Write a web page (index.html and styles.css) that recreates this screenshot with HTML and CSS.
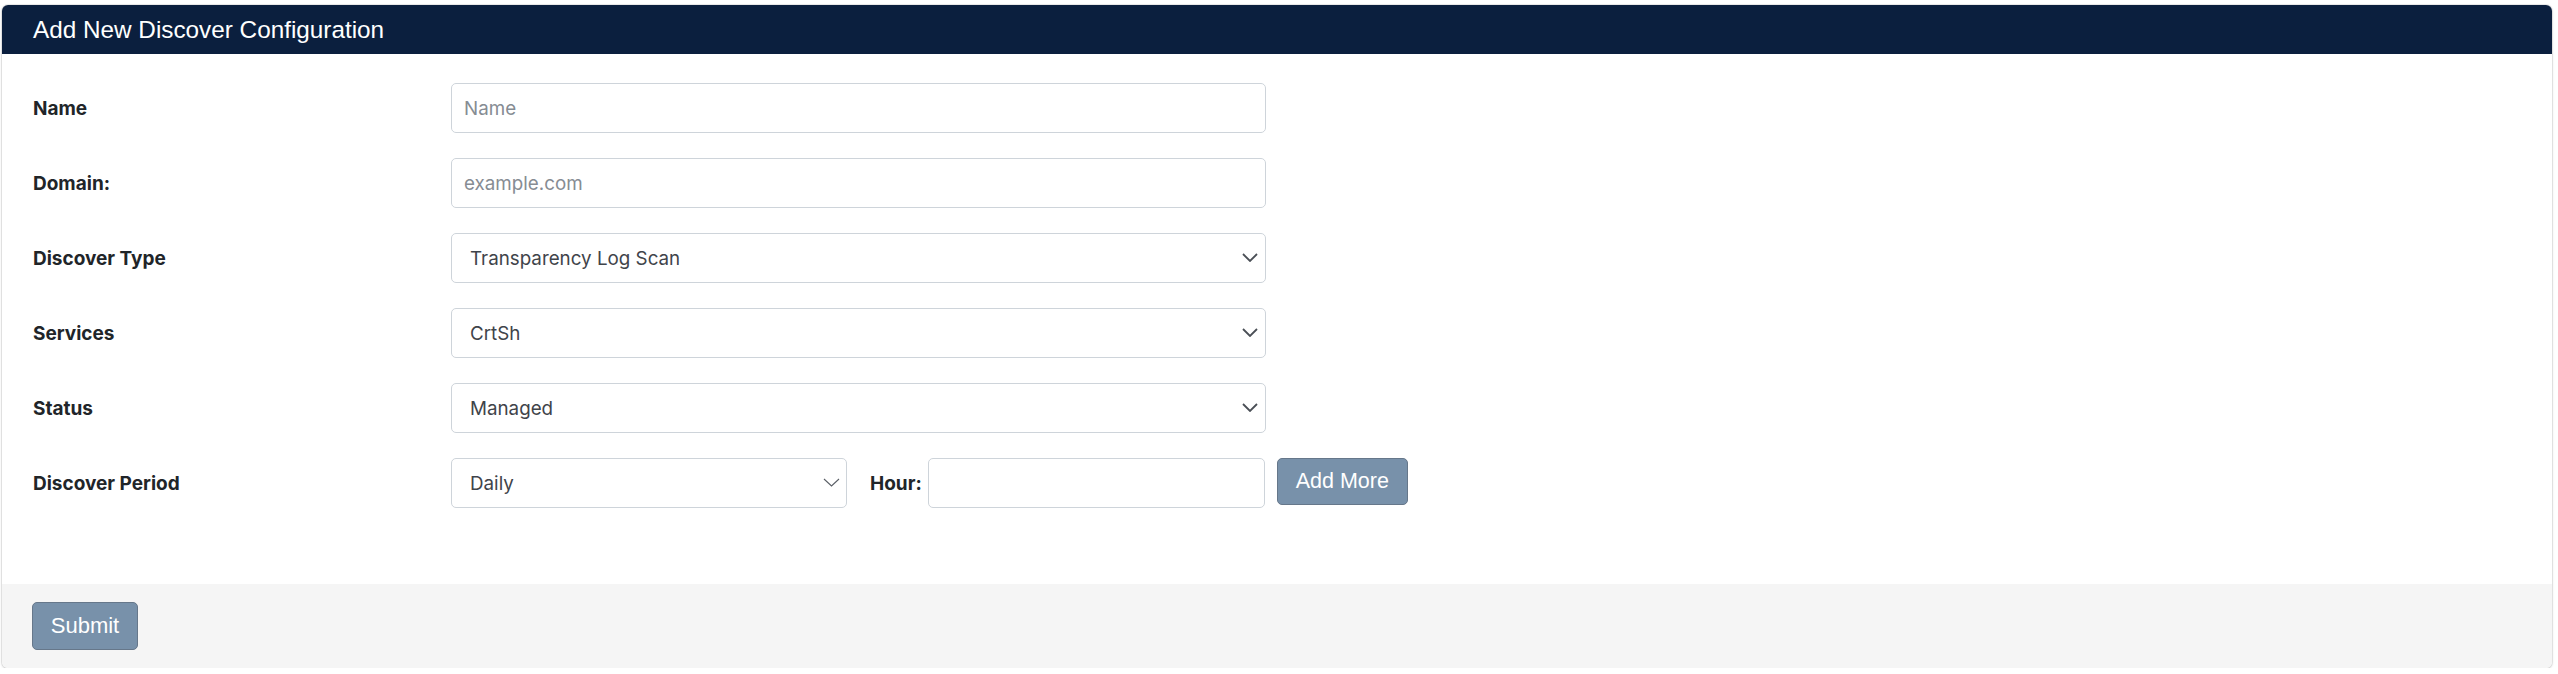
FILE: index.html
```html
<!DOCTYPE html>
<html lang="en">
<head>
<meta charset="utf-8">
<title>Add New Discover Configuration</title>
<link rel="stylesheet" href="styles.css">
</head>
<body>
<div class="page">
  <div class="card">
    <div class="card-header">Add New Discover Configuration</div>
    <form class="card-body">
      <div class="row">
        <label class="lbl">Name</label>
        <div class="field"><input class="ctl" type="text" placeholder="Name"></div>
      </div>
      <div class="row">
        <label class="lbl">Domain:</label>
        <div class="field"><input class="ctl" type="text" placeholder="example.com"></div>
      </div>
      <div class="row">
        <label class="lbl">Discover Type</label>
        <div class="field sel">
          <select class="ctl"><option>Transparency Log Scan</option></select>
          <svg class="chev" width="16" height="9" viewBox="0 0 16 9"><path d="M1 1 L8 8 L15 1" fill="none" stroke="#4a4f56" stroke-width="1.8"/></svg>
        </div>
      </div>
      <div class="row">
        <label class="lbl">Services</label>
        <div class="field sel">
          <select class="ctl"><option>CrtSh</option></select>
          <svg class="chev" width="16" height="9" viewBox="0 0 16 9"><path d="M1 1 L8 8 L15 1" fill="none" stroke="#4a4f56" stroke-width="1.8"/></svg>
        </div>
      </div>
      <div class="row">
        <label class="lbl">Status</label>
        <div class="field sel">
          <select class="ctl"><option>Managed</option></select>
          <svg class="chev" width="16" height="9" viewBox="0 0 16 9"><path d="M1 1 L8 8 L15 1" fill="none" stroke="#4a4f56" stroke-width="1.8"/></svg>
        </div>
      </div>
      <div class="row">
        <label class="lbl">Discover Period</label>
        <div class="period">
          <div class="sel sel-period">
            <select class="ctl"><option>Daily</option></select>
            <svg class="chev chev-thin" width="17" height="9" viewBox="0 0 17 9"><path d="M1 1 L8.5 8 L16 1" fill="none" stroke="#5a5f66" stroke-width="1.1"/></svg>
          </div>
          <label class="hour-lbl">Hour:</label>
          <input class="ctl hour" type="text">
          <button type="button" class="btn btn-add">Add More</button>
        </div>
      </div>
    </form>
    <div class="card-footer">
      <button type="button" class="btn btn-submit">Submit</button>
    </div>
  </div>
</div>
</body>
</html>
```

FILE: styles.css
```css
* { box-sizing: border-box; }

html, body {
  margin: 0;
  background: #ffffff;
}

.page {
  padding: 5px 6px 0 2px;
}

.card {
  background: #ffffff;
  border-radius: 6px;
  box-shadow: 0 0 0 1px rgba(0, 0, 0, 0.07), 0 1px 3px rgba(0, 0, 0, 0.16);
  overflow: hidden;
}

.card-header {
  height: 49px;
  background: #0b1f3e;
  color: #ffffff;
  font-family: "Liberation Sans", Arial, sans-serif;
  font-size: 24.3px;
  display: flex;
  align-items: center;
  padding: 0 31px;
}

.card-body {
  padding: 29px 31px 76px 31px;
  display: flex;
  flex-direction: column;
  gap: 25px;
  margin: 0;
}

.row {
  display: grid;
  grid-template-columns: 418px auto;
  justify-content: start;
  align-items: center;
  height: 50px;
}

.lbl, .hour-lbl {
  font-family: Inter, "Noto Sans", sans-serif;
  font-weight: 700;
  font-size: 19px;
  color: #212529;
}

.field {
  position: relative;
  width: 815px;
  height: 50px;
}

.ctl {
  width: 100%;
  height: 50px;
  border: 1px solid #ced4da;
  border-radius: 5px;
  background: #ffffff;
  font-family: Inter, "Noto Sans", sans-serif;
  font-size: 18.8px;
  color: #3f444a;
  padding: 0 12px;
  margin: 0;
  outline: none;
}

.ctl::placeholder {
  color: #868c93;
}

select.ctl {
  appearance: none;
  -webkit-appearance: none;
  padding: 0 40px 0 18px;
}

.sel {
  position: relative;
}

.chev {
  position: absolute;
  right: 8px;
  top: 50%;
  margin-top: -5px;
  pointer-events: none;
}

.chev-thin {
  right: 7px;
}

.period {
  display: flex;
  align-items: center;
  height: 50px;
}

.sel-period {
  width: 396px;
  height: 50px;
  flex: none;
}

.hour-lbl {
  margin-left: 23px;
  margin-right: 6px;
  flex: none;
}

.ctl.hour {
  width: 337px;
  flex: none;
}

.btn {
  font-family: "Liberation Sans", Arial, sans-serif;
  color: #ffffff;
  background: #7891aa;
  border: 1px solid #66778a;
  border-radius: 5px;
  cursor: pointer;
  white-space: nowrap;
  padding: 0;
}

.btn-add {
  margin-left: 12px;
  width: 131px;
  height: 47px;
  font-size: 21.5px;
  align-self: flex-start;
  flex: none;
}

.card-footer {
  background: #f5f5f5;
  height: 84px;
  padding: 18px 30px;
}

.btn-submit {
  width: 106px;
  height: 48px;
  font-size: 22px;
}
```
